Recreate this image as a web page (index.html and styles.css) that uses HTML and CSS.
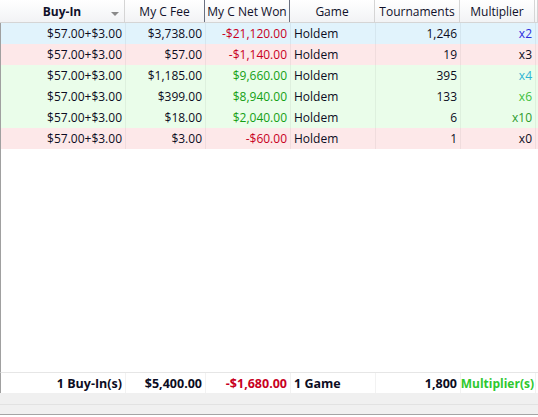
FILE: index.html
```html
<!DOCTYPE html>
<html lang="en">
<head>
  <meta charset="UTF-8">
  <title>Buy-In Report</title>
  <link rel="stylesheet" href="styles.css">
</head>
<body>
  <div class="report">
    <div class="row head">
      <div class="cell sorted">Buy-In<span class="arrow"></span></div>
      <div class="cell">My C Fee</div>
      <div class="cell dark">My C Net Won</div>
      <div class="cell dark">Game</div>
      <div class="cell">Tournaments</div>
      <div class="cell">Multiplier</div>
      <div class="cell"></div>
    </div>
    <div class="rows">
      <div class="row blue">
        <div class="cell num">$57.00+$3.00</div>
        <div class="cell num">$3,738.00</div>
        <div class="cell num loss">-$21,120.00</div>
        <div class="cell txt">Holdem</div>
        <div class="cell num">1,246</div>
        <div class="cell num x2">x2</div>
        <div class="cell"></div>
      </div>
      <div class="row pink">
        <div class="cell num">$57.00+$3.00</div>
        <div class="cell num">$57.00</div>
        <div class="cell num loss">-$1,140.00</div>
        <div class="cell txt">Holdem</div>
        <div class="cell num">19</div>
        <div class="cell num">x3</div>
        <div class="cell"></div>
      </div>
      <div class="row green">
        <div class="cell num">$57.00+$3.00</div>
        <div class="cell num">$1,185.00</div>
        <div class="cell num win">$9,660.00</div>
        <div class="cell txt">Holdem</div>
        <div class="cell num">395</div>
        <div class="cell num x4">x4</div>
        <div class="cell"></div>
      </div>
      <div class="row green">
        <div class="cell num">$57.00+$3.00</div>
        <div class="cell num">$399.00</div>
        <div class="cell num win">$8,940.00</div>
        <div class="cell txt">Holdem</div>
        <div class="cell num">133</div>
        <div class="cell num x6">x6</div>
        <div class="cell"></div>
      </div>
      <div class="row green">
        <div class="cell num">$57.00+$3.00</div>
        <div class="cell num">$18.00</div>
        <div class="cell num win">$2,040.00</div>
        <div class="cell txt">Holdem</div>
        <div class="cell num">6</div>
        <div class="cell num x10">x10</div>
        <div class="cell"></div>
      </div>
      <div class="row pink">
        <div class="cell num">$57.00+$3.00</div>
        <div class="cell num">$3.00</div>
        <div class="cell num loss">-$60.00</div>
        <div class="cell txt">Holdem</div>
        <div class="cell num">1</div>
        <div class="cell num">x0</div>
        <div class="cell"></div>
      </div>
    </div>
    <div class="row total">
      <div class="cell num">1 Buy-In(s)</div>
      <div class="cell num">$5,400.00</div>
      <div class="cell num loss">-$1,680.00</div>
      <div class="cell txt">1 Game</div>
      <div class="cell num">1,800</div>
      <div class="cell num multi">Multiplier(s)</div>
      <div class="cell"></div>
    </div>
    <div class="scrollbar"></div>
  </div>
</body>
</html>
```

FILE: styles.css
```css
body {
  margin: 0;
  padding: 0;
  background-color: #ffffff;
  font-family: 'Open Sans', 'Noto Sans', sans-serif;
  font-size: 12px;
  color: #0c0c22;
}
.report {
  display: flex;
  flex-direction: column;
  width: 538px;
  height: 417px;
  overflow: hidden;
}
.row {
  display: grid;
  grid-template-columns: 125px 80px 85px 85px 85px 75px 3px;
  height: 21px;
}
.cell {
  display: flex;
  align-items: center;
  overflow: hidden;
  white-space: nowrap;
  border-right: 1px solid rgba(0, 0, 0, 0.05);
  box-sizing: border-box;
}
.head {
  height: 23px;
  background: linear-gradient(#ffffff, #f2f3f5);
  border-bottom: 1px solid #d5d5d5;
  box-sizing: border-box;
}
.head .cell {
  justify-content: center;
  border-right: 1px solid #d5d5d5;
  color: #10102a;
  position: relative;
}
.head .cell.dark {
  border-left: 1px solid #6a7080;
  margin-left: -1px;
}
.head .sorted {
  font-weight: bold;
}
.arrow {
  position: absolute;
  right: 5px;
  top: 12px;
  border-left: 4px solid transparent;
  border-right: 4px solid transparent;
  border-top: 4px solid #8a8a8a;
}
.rows {
  flex: 1;
  border-left: 1px solid #a0a0a0;
}
.rows .row .cell:first-child {
  margin-left: -1px;
}
.num {
  justify-content: flex-end;
  padding-right: 3px;
}
.txt {
  padding-left: 3px;
}
.blue { background-color: #e1f3fc; }
.pink { background-color: #fde8e9; }
.green { background-color: #eafdea; }
.loss { color: #c8001e; }
.win { color: #14a014; }
.x2 { color: #2c2cdc; }
.x4 { color: #2cb4d4; }
.x6 { color: #3cc03c; }
.x10 { color: #2a9a2a; }
.total {
  font-weight: bold;
  font-size: 12.5px;
  border-top: 1px solid #e6e6e6;
  border-left: 1px solid #a0a0a0;
  height: 21px;
  box-sizing: border-box;
}
.total .cell:first-child {
  margin-left: -1px;
}
.total .multi {
  color: #2ec82e;
  padding-right: 1px;
  font-size: 12px;
}
.scrollbar {
  height: 24px;
  background-image: linear-gradient(#f0f0f0 11px, #e2e2e2 11px, #e2e2e2 12px, #f0f0f0 12px, #f0f0f0 21px, #a4a4a4 21px, #a4a4a4 22px, #ffffff 22px);
}
```
